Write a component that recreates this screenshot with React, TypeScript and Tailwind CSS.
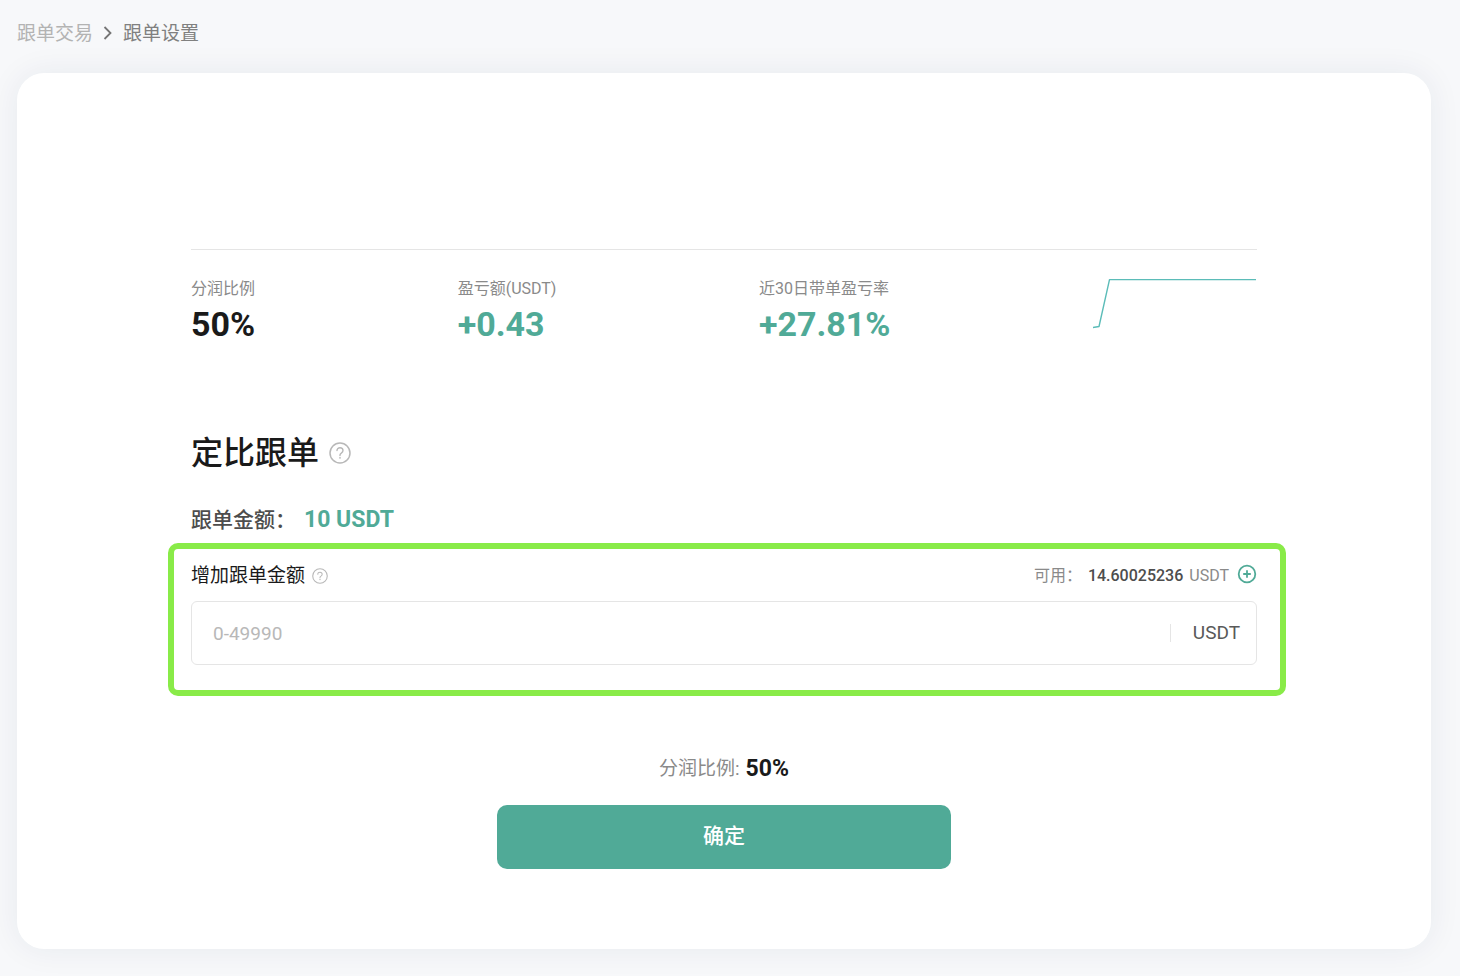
import { useState } from "react";

const stats = [
  { label: "分润比例", value: "50%", tone: "text-[#1a1a1a]" },
  { label: "盈亏额(USDT)", value: "+0.43", tone: "text-[#50aa97]" },
  { label: "近30日带单盈亏率", value: "+27.81%", tone: "text-[#50aa97]" },
];

function HelpIcon({ className }: { className: string }) {
  return (
    <svg viewBox="0 0 22 22" fill="none" stroke="currentColor" className={className} aria-hidden="true">
      <circle cx="11" cy="11" r="10" strokeWidth="1.5" />
      <path
        d="M8 8.6C8 6.9 9.3 5.7 11 5.7s3 1.1 3 2.8c0 1.3-.8 2-1.7 2.6-.8.5-1.3 1-1.3 2v.4"
        strokeWidth="1.4"
        strokeLinecap="round"
      />
      <circle cx="11" cy="15.8" r="0.9" fill="currentColor" stroke="none" />
    </svg>
  );
}

function PlusCircleIcon() {
  return (
    <svg width="20" height="20" viewBox="0 0 20 20" fill="none" stroke="currentColor" strokeWidth="1.8" aria-hidden="true">
      <circle cx="10" cy="10" r="8.3" />
      <path d="M10 6.2v7.6M6.2 10h7.6" />
    </svg>
  );
}

function ProfitChart() {
  return (
    <svg width="164" height="52" viewBox="0 0 164 52" fill="none" className="shrink-0" aria-hidden="true">
      <path d="M0 49.5L6 48.5L16.5 1.6H163" stroke="#5bbcb8" strokeWidth="1.4" strokeLinejoin="round" />
    </svg>
  );
}

export default function App() {
  const [amount, setAmount] = useState("");

  return (
    <main className="min-h-screen bg-[#f7f8fa] pb-[27px] pl-[17px] pr-[29px] pt-[18px] font-['Roboto','Noto_Sans_CJK_SC',sans-serif]">
      <nav className="flex h-8 items-center text-[19px] leading-8" aria-label="breadcrumb">
        <a href="#copy-trading" className="text-[#b3b3b3]">
          跟单交易
        </a>
        <svg width="30" height="16" viewBox="0 0 30 16" fill="none" className="shrink-0" aria-hidden="true">
          <path d="M11.5 1L17.5 7L11.5 13" stroke="#757575" strokeWidth="1.8" />
        </svg>
        <span className="text-[#808080]">跟单设置</span>
      </nav>

      <div className="mt-[23px] rounded-[27px] bg-white px-10 pb-20 pt-[176px] shadow-[0_0_32px_rgba(30,40,90,0.07)]">
        <div className="mx-auto max-w-[1066px]">
          <section className="flex justify-between border-t border-[#e5e5e5] pt-[27px]">
            {stats.map((item) => (
              <div key={item.label}>
                <div className="text-base leading-6 text-[#8a8a8a]">{item.label}</div>
                <div className={`text-[34px] font-bold leading-[46px] ${item.tone}`}>{item.value}</div>
              </div>
            ))}
            <div className="pt-px">
              <ProfitChart />
            </div>
          </section>

          <h1 className="mt-[82px] flex h-12 items-center gap-[10px] text-[32px] font-medium leading-12 text-[#1a1a1a]">
            定比跟单
            <HelpIcon className="size-[22px] text-[#b8b8b8]" />
          </h1>

          <div className="mt-[27px] flex h-8 items-center text-[23px] leading-8">
            <span className="text-[21px] font-medium text-[#4d4d4d]">跟单金额：</span>
            <span className="ml-2 font-bold text-[#50aa97]">10 USDT</span>
          </div>

          <section className="-ml-[23px] -mr-[29px] mt-[7px] rounded-[10px] border-6 border-[#89eb48] pb-[25px] pl-[17px] pr-[23px] pt-[11px]">
            <div className="flex h-8 items-center justify-between">
              <div className="flex items-center gap-[7px]">
                <label htmlFor="amount" className="text-[19px] leading-8 text-[#1a1a1a]">
                  增加跟单金额
                </label>
                <HelpIcon className="size-4 text-[#b8b8b8]" />
              </div>
              <div className="flex items-center text-base leading-8 text-[#8a8a8a]">
                <span>可用：</span>
                <span className="ml-[6px] font-medium text-[#4d4d4d]">14.60025236</span>
                <span className="ml-[6px]">USDT</span>
                <button type="button" aria-label="充值" className="mb-1 ml-2 text-[#50aa97]">
                  <PlusCircleIcon />
                </button>
              </div>
            </div>
            <div className="mt-[9px] flex h-16 items-center rounded-[6px] border border-[#e5e5e5] pl-[21px] pr-4">
              <input
                id="amount"
                type="text"
                inputMode="decimal"
                placeholder="0-49990"
                value={amount}
                onChange={(e) => setAmount(e.target.value)}
                className="h-full min-w-0 flex-1 bg-transparent text-[19px] text-[#4d4d4d] outline-none placeholder:text-[#b8b8b8]"
              />
              <span className="h-[18px] w-px bg-[#e5e5e5]" />
              <span className="ml-[22px] text-[19px] text-[#595959]">USDT</span>
            </div>
          </section>

          <div className="mt-[57px] flex h-8 items-center justify-center text-[19px] leading-8">
            <span className="text-[#8a8a8a]">分润比例:</span>
            <span className="ml-[6px] text-[23px] font-bold text-[#1a1a1a]">50%</span>
          </div>

          <button
            type="button"
            className="mx-auto mt-5 block h-16 w-full max-w-[454px] rounded-[10px] bg-[#50aa97] text-[21px] font-medium text-white"
          >
            确定
          </button>
        </div>
      </div>
    </main>
  );
}
